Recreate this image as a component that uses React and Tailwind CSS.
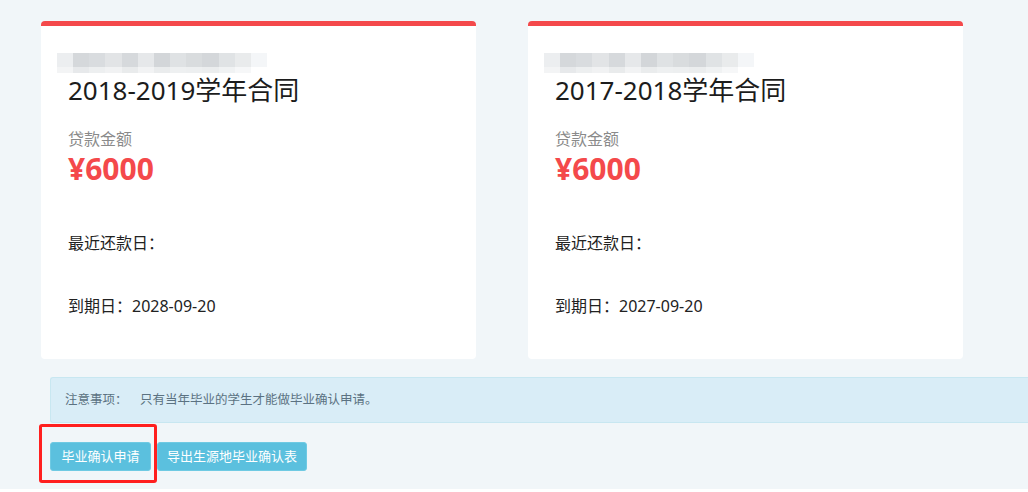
import React from "react";

const font = { fontFamily: '"Noto Sans", "Noto Sans CJK SC", sans-serif' };

function Blur() {
  const top = ["#eceef0", "#d5d8db", "#d9dcdf", "#e2e4e6", "#d6d9dc", "#e6e8ea", "#d3d6d9", "#dfe2e4", "#d9dcde", "#d4d7da", "#e0e3e5", "#e9ebec", "#f4f6f8"];
  const bot = ["#f3f4f5", "#e7e9eb", "#edeff0", "#f1f2f3", "#e9ebec", "#f2f3f4", "#eaeced", "#eef0f1", "#edeff0", "#ebedee", "#f0f2f3", "#f6f7f8", "#ffffff"];
  return (
    <div className="flex flex-col w-[210px] h-[20px] blur-[0.6px]">
      <div className="flex h-[14px]">
        {top.map((c, i) => (
          <div key={i} className="flex-1" style={{ background: c }} />
        ))}
      </div>
      <div className="flex h-[6px]">
        {bot.map((c, i) => (
          <div key={i} className="flex-1" style={{ background: c }} />
        ))}
      </div>
    </div>
  );
}

function Card({ title, due }) {
  return (
    <div className="w-[435px] h-[338px] bg-white rounded-[4px] border-t-[5px] border-[#f4494b] flex flex-col">
      <div className="ml-[16px] mt-[27px]">
        <Blur />
      </div>
      <div className="pl-[27px] flex flex-col">
        <div className="mt-[4px] text-[26px] leading-[26px] text-[#1c1c1c]">{title}</div>
        <div className="mt-[28px] text-[16px] leading-[16px] text-[#8a8a8a]">贷款金额</div>
        <div className="mt-[7px] text-[30px] leading-[30px] font-bold text-[#f4494b]">¥6000</div>
        <div className="mt-[51px] text-[16px] leading-[16px] text-[#222]">最近还款日：</div>
        <div className="mt-[47px] text-[16px] leading-[16px] text-[#222]">到期日：{due}</div>
      </div>
    </div>
  );
}

export default function App() {
  return (
    <div style={font} className="w-[1028px] h-[492px] bg-white overflow-hidden">
      <div className="h-[489px] bg-[#f1f6f9] relative">
        <div className="flex gap-[52px] pl-[41px] pt-[21px]">
          <Card title="2018-2019学年合同" due="2028-09-20" />
          <Card title="2017-2018学年合同" due="2027-09-20" />
        </div>
        <div className="ml-[50px] mt-[18px] h-[46px] bg-[#d9edf7] border border-r-0 border-[#c8e7f1] rounded-l-[3px] flex items-center text-[12.5px] text-[#5b7282]">
          <span className="ml-[14px] w-[75px]">注意事项：</span>
          <span>只有当年毕业的学生才能做毕业确认申请。</span>
        </div>
        <div className="flex gap-[6px] ml-[50px] mt-[19px]">
          <div className="w-[101px] h-[29px] bg-[#5bc0de] border border-[#6fcae3] rounded-[3px] flex items-center justify-center text-[13px] text-white">毕业确认申请</div>
          <div className="w-[150px] h-[29px] bg-[#5bc0de] border border-[#6fcae3] rounded-[3px] flex items-center justify-center text-[13px] text-white">导出生源地毕业确认表</div>
        </div>
        <div className="absolute left-[39px] top-[424px] w-[118px] h-[59px] border-[3px] border-[#ff1f1f] rounded-[3px]" />
      </div>
    </div>
  );
}
